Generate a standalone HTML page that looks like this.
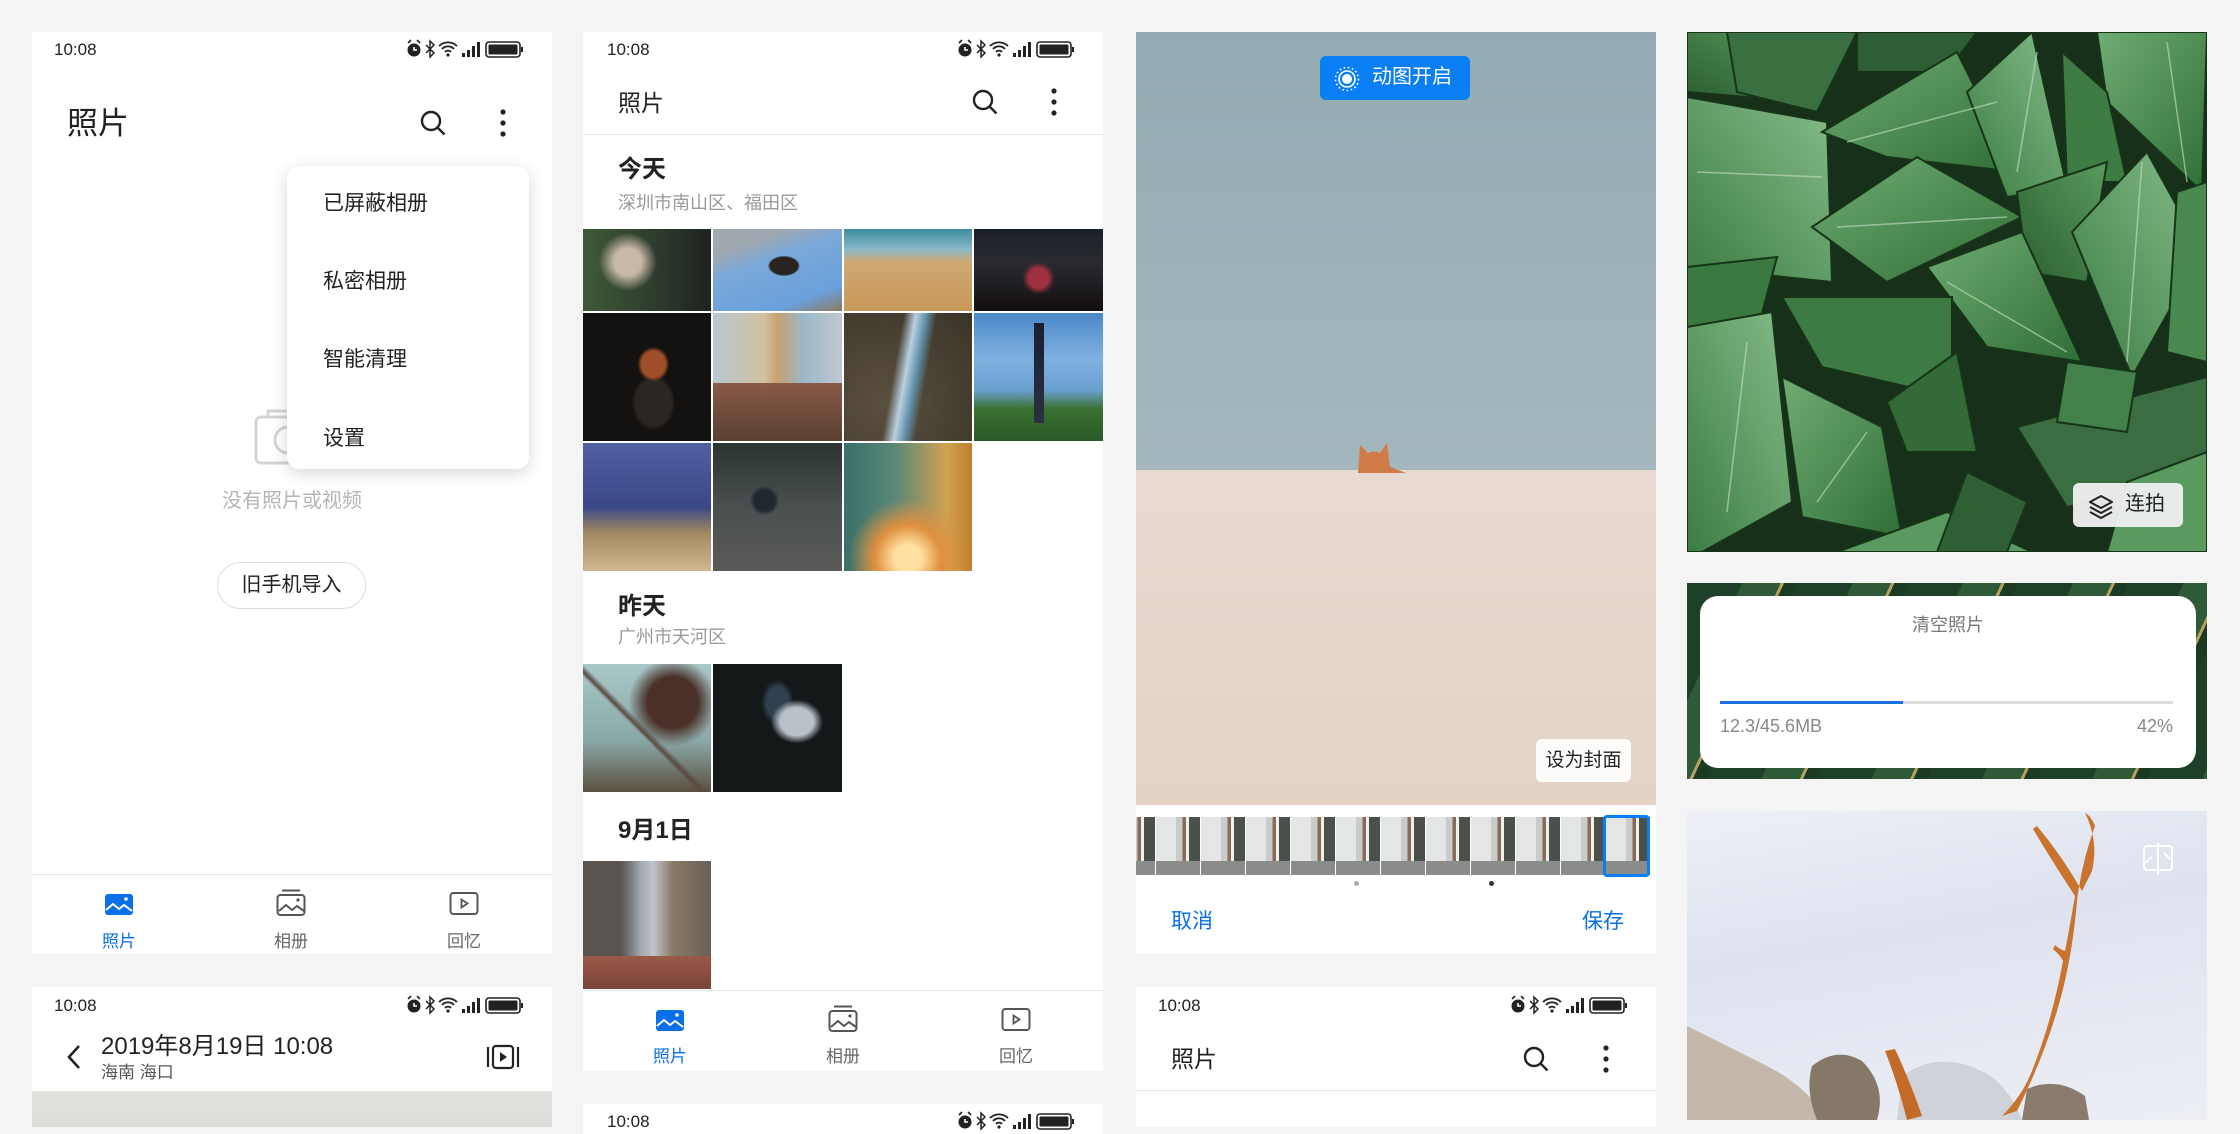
<!DOCTYPE html>
<html><head><meta charset="utf-8">
<style>
*{margin:0;padding:0;box-sizing:border-box}
body{width:2240px;height:1120px;background:#f4f4f4;position:relative;overflow:hidden;font-family:"Liberation Sans","Noto Sans CJK SC",sans-serif;color:#222}
.a{position:absolute}
.p{position:absolute;background:#fff;overflow:hidden}
.t{position:absolute;white-space:nowrap;line-height:1}
.time{font-size:17px;color:#222}
.tab{position:absolute;width:100px;text-align:center;font-size:17px;color:#666}
.tab.on{color:#0a6fe8}
.fr{position:absolute;top:0;width:44px;height:58px;background:linear-gradient(90deg,#e4e6e6 0 45%,#c8ccca 45% 60%,#8a6a58 60% 68%,#f0f0ee 68% 75%,#4a504a 75%)}
.fr::after{content:"";position:absolute;left:0;bottom:0;width:44px;height:14px;background:#8a8c8a}
</style></head><body>
<svg width="0" height="0" style="position:absolute">
<defs>
<symbol id="sb" viewBox="0 0 124 20">
<circle cx="8" cy="11" r="6.5" fill="#222"/><path d="M2 4l3-3M14 4l-3-3" stroke="#222" stroke-width="1.6"/><path d="M8 8v3h3" stroke="#fff" stroke-width="1.6" fill="none"/>
<path d="M20 6l8 8-4 4V2l4 4-8 8" stroke="#222" stroke-width="1.5" fill="none"/>
<path d="M33 7a13 13 0 0 1 18 0M36 10a8 8 0 0 1 12 0M39 13a4 4 0 0 1 6 0" stroke="#222" stroke-width="1.8" fill="none"/><circle cx="42" cy="16" r="1.6" fill="#222"/>
<rect x="56" y="14" width="3" height="4" fill="#222"/><rect x="61" y="11" width="3" height="7" fill="#222"/><rect x="66" y="7" width="3" height="11" fill="#222"/><rect x="71" y="3" width="3" height="15" fill="#222"/>
<rect x="80" y="3" width="34" height="15" rx="3" fill="none" stroke="#222" stroke-width="1.6"/><rect x="82.5" y="5.5" width="29" height="10" rx="1" fill="#222"/><rect x="115" y="8" width="2" height="5" fill="#222"/>
</symbol>
<symbol id="srch" viewBox="0 0 30 30"><circle cx="13" cy="13" r="9" stroke="#222" stroke-width="2.4" fill="none"/><path d="M19.5 19.5l7 7" stroke="#222" stroke-width="2.4"/></symbol>
<symbol id="dots" viewBox="0 0 10 30"><circle cx="5" cy="4" r="2.6" fill="#222"/><circle cx="5" cy="15" r="2.6" fill="#222"/><circle cx="5" cy="26" r="2.6" fill="#222"/></symbol>
<symbol id="tphoto" viewBox="0 0 30 24"><rect x="1" y="2" width="28" height="21" rx="3" fill="#0a6fe8"/><path d="M2 18l7-6 6 5 5-4 8 6" stroke="#fff" stroke-width="2" fill="none"/><circle cx="22" cy="7" r="1.8" fill="#fff"/></symbol>
<symbol id="talbum" viewBox="0 0 30 28"><path d="M6 1.5h18" stroke="#555" stroke-width="2"/><rect x="1.5" y="6" width="27" height="20" rx="3" fill="none" stroke="#555" stroke-width="2"/><path d="M3 22l7-6 6 5 5-4 7 5" stroke="#555" stroke-width="2" fill="none"/><circle cx="22" cy="11" r="1.6" fill="#555"/></symbol>
<symbol id="tmem" viewBox="0 0 30 26"><rect x="1.5" y="2" width="27" height="21" rx="3" fill="none" stroke="#555" stroke-width="2"/><path d="M12.5 8.5v8l6-4z" fill="none" stroke="#555" stroke-width="1.8"/></symbol>
</defs></svg>

<!-- PANEL 1 -->
<div class="p" style="left:32px;top:32px;width:520px;height:922px">
 <div class="t time" style="left:22px;top:9px">10:08</div>
 <svg class="a" style="left:374px;top:7px" width="124" height="20"><use href="#sb"/></svg>
 <div class="t" style="left:35px;top:76px;font-size:31px;color:#222">照片</div>
 <svg class="a" style="left:386px;top:76px" width="30" height="30"><use href="#srch"/></svg>
 <svg class="a" style="left:466px;top:76px" width="10" height="30"><use href="#dots"/></svg>
 <svg class="a" style="left:222px;top:375px" width="70" height="60"><rect x="2" y="10" width="64" height="46" rx="5" fill="none" stroke="#d4d4d4" stroke-width="3"/><path d="M14 10V4h22v6" fill="none" stroke="#d4d4d4" stroke-width="3"/><circle cx="34" cy="33" r="13" fill="none" stroke="#d4d4d4" stroke-width="3"/></svg>
 <div class="t" style="left:0;width:520px;text-align:center;top:459px;font-size:20px;color:#b5b5b5">没有照片或视频</div>
 <div class="a" style="left:185px;top:530px;width:149px;height:47px;border:1px solid #ddd;border-radius:24px;font-size:20px;text-align:center;line-height:45px;color:#222">旧手机导入</div>
 <div class="a" style="left:255px;top:134px;width:242px;height:303px;background:#fff;border-radius:12px;box-shadow:0 4px 16px rgba(0,0,0,.16)">
  <div class="t" style="left:36px;top:27px;font-size:21px;color:#222">已屏蔽相册</div>
  <div class="t" style="left:36px;top:105px;font-size:21px;color:#222">私密相册</div>
  <div class="t" style="left:36px;top:183px;font-size:21px;color:#222">智能清理</div>
  <div class="t" style="left:36px;top:262px;font-size:21px;color:#222">设置</div>
 </div>
 <div class="a" style="left:0;top:842px;width:520px;height:1px;background:#e6e6e6"></div>
 <svg class="a" style="left:72px;top:860px" width="30" height="24"><use href="#tphoto"/></svg>
 <svg class="a" style="left:244px;top:857px" width="30" height="28"><use href="#talbum"/></svg>
 <svg class="a" style="left:417px;top:859px" width="30" height="26"><use href="#tmem"/></svg>
 <div class="tab on" style="left:37px;top:895px">照片</div>
 <div class="tab" style="left:209px;top:895px">相册</div>
 <div class="tab" style="left:382px;top:895px">回忆</div>
</div>

<!-- PANEL 5 -->
<div class="p" style="left:32px;top:987px;width:520px;height:140px">
 <div class="t time" style="left:22px;top:10px">10:08</div>
 <svg class="a" style="left:374px;top:8px" width="124" height="20"><use href="#sb"/></svg>
 <svg class="a" style="left:34px;top:56px" width="16" height="28"><path d="M13 3L3 14l10 11" stroke="#222" stroke-width="2.6" fill="none"/></svg>
 <div class="t" style="left:69px;top:48px;font-size:24px;color:#222">2019年8月19日 10:08</div>
 <div class="t" style="left:69px;top:77px;font-size:17px;color:#555">海南 海口</div>
 <svg class="a" style="left:454px;top:57px" width="34" height="26"><path d="M2 3v20M32 3v20" stroke="#222" stroke-width="2.2"/><rect x="7" y="2" width="20" height="22" rx="3" fill="none" stroke="#222" stroke-width="2.2"/><path d="M14 8v10l7-5z" fill="#222"/></svg>
 <div class="a" style="left:0;top:104px;width:520px;height:40px;background:linear-gradient(#e4e2df,#dedcd9)"></div>
</div>

<!-- PANEL 2 -->
<div class="p" style="left:583px;top:32px;width:520px;height:1039px">
 <div class="t time" style="left:24px;top:9px">10:08</div>
 <svg class="a" style="left:374px;top:7px" width="124" height="20"><use href="#sb"/></svg>
 <div class="t" style="left:35px;top:60px;font-size:23px;color:#222">照片</div>
 <svg class="a" style="left:387px;top:55px" width="30" height="30"><use href="#srch"/></svg>
 <svg class="a" style="left:466px;top:55px" width="10" height="30"><use href="#dots"/></svg>
 <div class="a" style="left:0;top:102px;width:520px;height:1px;background:#e6e6e6"></div>
 <div class="t" style="left:35px;top:126px;font-size:24px;font-weight:bold;color:#222">今天</div>
 <div class="t" style="left:35px;top:162px;font-size:18px;color:#999">深圳市南山区、福田区</div>
 <div class="a" style="left:0;top:197px;width:128px;height:82px;background:radial-gradient(circle at 35% 40%,#c8b8a8 0 14%,transparent 30%),linear-gradient(90deg,#3f5a38,#2c3a2c 60%,#1e2220)"></div>
 <div class="a" style="left:130px;top:197px;width:129px;height:82px;background:radial-gradient(ellipse at 55% 45%,#2a2420 0 14%,transparent 16%),linear-gradient(160deg,#a0a8b0 20%,#7aa8d8 40%,#6aa0dc 80%,#8a7a60)"></div>
 <div class="a" style="left:261px;top:197px;width:128px;height:82px;background:linear-gradient(#3e8ca0,#8ab8c8 25%,#cfa874 40%,#c89858 100%)"></div>
 <div class="a" style="left:391px;top:197px;width:129px;height:82px;background:radial-gradient(circle at 50% 60%,#a03040 0 12%,transparent 20%),linear-gradient(#1a2028,#2a2a30 40%,#141010)"></div>
 <div class="a" style="left:0;top:281px;width:128px;height:128px;background:radial-gradient(ellipse at 55% 40%,#a05028 0 12%,transparent 16%),radial-gradient(ellipse at 55% 70%,#2a2624 0 18%,transparent 22%),#141210"></div>
 <div class="a" style="left:130px;top:281px;width:129px;height:128px;background:linear-gradient(90deg,#b8c8d0,#d0c0a0 40%,#c8a070 50%,#9ab8c8 70%,#c0c8d0)"><div class="a" style="left:0;top:70px;width:129px;height:58px;background:linear-gradient(#8a5a48,#5a4030)"></div></div>
 <div class="a" style="left:261px;top:281px;width:128px;height:128px;background:linear-gradient(100deg,transparent 40%,#b8d0e0 48%,#6090a8 55%,transparent 62%),radial-gradient(circle at 30% 70%,#5a5040,#3a3428)"></div>
 <div class="a" style="left:391px;top:281px;width:129px;height:128px;background:linear-gradient(#4a88c8,#80b0e0 35%,#6aa0d0 60%,#3a7030 75%,#2a5a28)"><div class="a" style="left:60px;top:10px;width:10px;height:100px;background:linear-gradient(#1a2030,#2a3040)"></div></div>
 <div class="a" style="left:0;top:411px;width:128px;height:128px;background:linear-gradient(#5060a0,#3a4888 50%,#a08860 70%,#d0b890)"></div>
 <div class="a" style="left:130px;top:411px;width:129px;height:128px;background:radial-gradient(circle at 40% 45%,#202830 0 10%,transparent 14%),linear-gradient(#2a3430,#4a5050 50%,#5a5a58)"></div>
 <div class="a" style="left:261px;top:411px;width:128px;height:128px;background:radial-gradient(circle at 50% 90%,#ffe0a0 0 10%,#e09040 25%,transparent 45%),linear-gradient(90deg,#3a7068,#5a8878 40%,#d0a050 80%,#c08030)"></div>
 <div class="t" style="left:35px;top:563px;font-size:24px;font-weight:bold;color:#222">昨天</div>
 <div class="t" style="left:35px;top:596px;font-size:18px;color:#999">广州市天河区</div>
 <div class="a" style="left:0;top:632px;width:128px;height:128px;background:linear-gradient(45deg,transparent 45%,#5a4a40 47%,transparent 50%),radial-gradient(circle at 70% 30%,#4a3028 0 20%,transparent 35%),linear-gradient(#a8c8c8,#8aa8a8 60%,#5a5040)"></div>
 <div class="a" style="left:130px;top:632px;width:129px;height:128px;background:radial-gradient(ellipse at 65% 45%,#b8c0c8 0 14%,transparent 22%),radial-gradient(ellipse at 50% 30%,#304050 0 12%,transparent 18%),#141818"></div>
 <div class="t" style="left:35px;top:787px;font-size:24px;font-weight:bold;color:#222">9月1日</div>
 <div class="a" style="left:0;top:829px;width:128px;height:128px;background:linear-gradient(90deg,#5a5450 0 30%,#a0a8b0 45%,#c0c4c8 55%,#8a7a68 70%,#6a6058)"><div class="a" style="left:0;top:95px;width:128px;height:33px;background:linear-gradient(#9a5a48,#7a4438)"></div></div>
 <div class="a" style="left:0;top:958px;width:520px;height:1px;background:#e6e6e6"></div>
 <svg class="a" style="left:72px;top:976px" width="30" height="24"><use href="#tphoto"/></svg>
 <svg class="a" style="left:245px;top:973px" width="30" height="28"><use href="#talbum"/></svg>
 <svg class="a" style="left:418px;top:975px" width="30" height="26"><use href="#tmem"/></svg>
 <div class="tab on" style="left:37px;top:1010px">照片</div>
 <div class="tab" style="left:210px;top:1010px">相册</div>
 <div class="tab" style="left:383px;top:1010px">回忆</div>
</div>
<div class="p" style="left:583px;top:1104px;width:520px;height:30px">
 <div class="t time" style="left:24px;top:9px">10:08</div>
 <svg class="a" style="left:374px;top:7px" width="124" height="20"><use href="#sb"/></svg>
</div>

<!-- PANEL 3 -->
<div class="p" style="left:1136px;top:32px;width:520px;height:922px">
 <div class="a" style="left:0;top:0;width:520px;height:440px;background:linear-gradient(#93abb3,#a3b7bd)"></div>
 <div class="a" style="left:0;top:438px;width:520px;height:335px;background:linear-gradient(#e8dad2,#e4d2c6)"></div>
 <svg class="a" style="left:218px;top:405px" width="60" height="40"><path d="M4 36 L6 8 L14 16 Q20 13 26 16 L33 6 L36 30 Q42 32 52 36 Z" fill="#d07a48"/></svg>
 <div class="a" style="left:184px;top:24px;width:150px;height:44px;background:#0a7ff5;border-radius:6px">
  <svg class="a" style="left:14px;top:10px" width="26" height="26"><circle cx="13" cy="13" r="5" fill="#fff"/><circle cx="13" cy="13" r="8" fill="none" stroke="#fff" stroke-width="1.6"/><circle cx="13" cy="13" r="11.5" fill="none" stroke="#fff" stroke-width="1.6" stroke-dasharray="1.6 2.6"/></svg>
  <div class="t" style="left:52px;top:11px;font-size:20px;color:#fff">动图开启</div>
 </div>
 <div class="a" style="left:400px;top:707px;width:95px;height:43px;background:rgba(255,255,255,.92);border-radius:6px;font-size:19px;text-align:center;line-height:43px;color:#222">设为封面</div>
 <div class="a" style="left:0;top:785px;width:520px;height:58px">
  <div class="fr" style="left:-25px"></div><div class="fr" style="left:20px"></div><div class="fr" style="left:65px"></div><div class="fr" style="left:110px"></div><div class="fr" style="left:155px"></div><div class="fr" style="left:200px"></div><div class="fr" style="left:245px"></div><div class="fr" style="left:290px"></div><div class="fr" style="left:335px"></div><div class="fr" style="left:380px"></div><div class="fr" style="left:425px"></div><div class="fr" style="left:470px"></div>
 </div>
 <div class="a" style="left:467px;top:783px;width:47px;height:62px;border:3px solid #0a7ff5;border-radius:4px"></div>
 <div class="a" style="left:218px;top:849px;width:5px;height:5px;border-radius:50%;background:#aaa"></div>
 <div class="a" style="left:353px;top:849px;width:5px;height:5px;border-radius:50%;background:#333"></div>
 <div class="t" style="left:35px;top:879px;font-size:21px;color:#0a6fe8">取消</div>
 <div class="t" style="left:446px;top:879px;font-size:21px;color:#0a6fe8">保存</div>
</div>

<!-- PANEL 7 -->
<div class="p" style="left:1136px;top:987px;width:520px;height:140px">
 <div class="t time" style="left:22px;top:10px">10:08</div>
 <svg class="a" style="left:374px;top:8px" width="124" height="20"><use href="#sb"/></svg>
 <div class="t" style="left:35px;top:61px;font-size:23px;color:#222">照片</div>
 <svg class="a" style="left:385px;top:57px" width="30" height="30"><use href="#srch"/></svg>
 <svg class="a" style="left:465px;top:57px" width="10" height="30"><use href="#dots"/></svg>
 <div class="a" style="left:0;top:103px;width:520px;height:1px;background:#e6e6e6"></div>
</div>

<!-- PANEL 4 leaves -->
<div class="p" style="left:1687px;top:32px;width:520px;height:520px;background:#16301a">
 <svg width="520" height="520" class="a" style="left:0;top:0">
  <defs><linearGradient id="lg" x1="0" y1="0" x2="1" y2="1"><stop offset="0" stop-color="#70ac74"/><stop offset="1" stop-color="#2f6e36"/></linearGradient>
  <linearGradient id="lg2" x1="1" y1="0" x2="0" y2="1"><stop offset="0" stop-color="#86bc8a"/><stop offset="1" stop-color="#3c7c42"/></linearGradient>
  <linearGradient id="lg3" x1="0" y1="1" x2="1" y2="0"><stop offset="0" stop-color="#2a5e30"/><stop offset="1" stop-color="#5a9a5e"/></linearGradient></defs>
  <g stroke="#173419" stroke-width="2">
  <path d="M0 0 L130 0 L120 70 L0 60 Z" fill="url(#lg3)"/>
  <path d="M40 0 L170 0 L130 80 L50 60Z" fill="#3a7040"/>
  <path d="M170 0 L290 0 L260 40 L170 40Z" fill="#2e5e34"/>
  <path d="M0 65 L140 90 L145 250 L0 235 Z" fill="url(#lg2)"/>
  <path d="M135 100 L270 20 L330 140 L200 125 Z" fill="url(#lg)"/>
  <path d="M280 60 L345 0 L380 155 L320 165 Z" fill="url(#lg2)"/>
  <path d="M410 0 L520 0 L515 160 L420 70 Z" fill="url(#lg)"/>
  <path d="M375 20 L420 60 L440 150 L380 150 Z" fill="#3e7c44"/>
  <path d="M125 195 L230 125 L335 185 L200 250 Z" fill="url(#lg)"/>
  <path d="M330 160 L420 130 L400 250 L340 240 Z" fill="url(#lg3)"/>
  <path d="M385 200 L460 120 L515 220 L445 345 Z" fill="url(#lg2)"/>
  <path d="M490 160 L520 150 L520 330 L480 320 Z" fill="#4a8a50"/>
  <path d="M240 235 L335 200 L395 330 L300 315 Z" fill="url(#lg)"/>
  <path d="M0 235 L90 225 L70 300 L0 300 Z" fill="#3a7a40"/>
  <path d="M0 295 L85 280 L105 470 L15 520 L0 520 Z" fill="url(#lg2)"/>
  <path d="M95 345 L195 395 L215 505 L115 485 Z" fill="url(#lg)"/>
  <path d="M95 265 L265 265 L265 365 L135 335 Z" fill="#3e7a44"/>
  <path d="M200 370 L270 320 L290 420 L220 420 Z" fill="#336a38"/>
  <path d="M330 395 L520 345 L520 445 L380 475 Z" fill="#3a6e40"/>
  <path d="M380 330 L450 340 L440 400 L370 390Z" fill="#44804a"/>
  <path d="M150 520 L260 480 L345 520 Z" fill="#5a9a60"/>
  <path d="M440 450 L520 420 L520 520 L420 520 Z" fill="#5a9a5e"/>
  <path d="M280 440 L340 470 L320 520 L250 520Z" fill="#2e6034"/>
  </g>
  <g stroke="#c8e0c8" stroke-width="1.5" opacity=".6" fill="none">
  <path d="M10 140 L135 145"/><path d="M160 110 L310 70"/><path d="M330 140 L350 20"/><path d="M150 195 L320 185"/><path d="M440 330 L455 130"/><path d="M40 480 L60 310"/><path d="M130 470 L180 400"/><path d="M480 10 L500 150"/><path d="M260 250 L380 320"/>
  </g>
 </svg>
 <div class="a" style="left:386px;top:451px;width:110px;height:44px;background:rgba(240,240,240,.95);border-radius:6px">
  <svg class="a" style="left:15px;top:10px" width="26" height="26"><path d="M13 3L24 9 13 15 2 9Z" fill="none" stroke="#222" stroke-width="2" stroke-linejoin="round"/><path d="M2 14l11 6 11-6M2 19l11 6 11-6" fill="none" stroke="#222" stroke-width="2" stroke-linejoin="round"/></svg>
  <div class="t" style="left:52px;top:11px;font-size:20px;color:#222">连拍</div>
 </div>
</div>

<!-- PANEL 6 -->
<div class="p" style="left:1687px;top:583px;width:520px;height:196px;background:repeating-linear-gradient(115deg,#1e4028 0 50px,#2e5a38 50px 85px,#b8a060 85px 88px,#1a3a24 88px 100px)">
 <div class="a" style="left:13px;top:13px;width:496px;height:172px;background:#fff;border-radius:18px">
  <div class="t" style="left:0;width:496px;text-align:center;top:20px;font-size:18px;color:#777">清空照片</div>
  <div class="a" style="left:20px;top:105px;width:453px;height:3px;background:#ddd"></div>
  <div class="a" style="left:20px;top:105px;width:183px;height:3px;background:#1a72e0"></div>
  <div class="t" style="left:20px;top:121px;font-size:18px;color:#888">12.3/45.6MB</div>
  <div class="t" style="right:23px;top:121px;font-size:18px;color:#888">42%</div>
 </div>
</div>

<!-- PANEL 8 -->
<div class="p" style="left:1687px;top:811px;width:520px;height:309px;background:linear-gradient(170deg,#eef0f6,#dde2ee 40%,#e6e9f2 70%,#eceef4)">
 <svg width="520" height="309" class="a" style="left:0;top:0">
  <path d="M0 215 Q40 235 80 255 Q120 275 140 309 L0 309Z" fill="#c4b8ac"/>
  <path d="M125 255 Q150 235 175 250 Q200 275 190 309 L130 309 Q118 280 125 255Z" fill="#857868"/>
  <path d="M215 265 Q250 240 290 258 Q320 270 335 309 L210 309Z" fill="#cfd2d8"/>
  <path d="M340 278 Q370 265 398 285 L402 309 L335 309Z" fill="#8a7c6c"/>
  <path d="M198 240 L208 238 Q225 275 235 305 L220 309 Q210 270 198 240Z" fill="#c46a28"/>
  <path d="M330 300 Q355 250 370 200 Q385 150 390 90 Q395 50 408 15 Q404 5 398 2 Q412 30 405 60 L395 80 Q375 45 350 15 L346 18 Q365 50 388 85 Q382 120 378 140 Q372 138 368 134 L366 138 Q374 145 376 150 Q365 210 345 260 Q335 285 315 305Z" fill="#c8732e"/>
 </svg>
 <svg class="a" style="left:455px;top:32px" width="32" height="32"><rect x="2" y="3" width="28" height="24" rx="3" fill="none" stroke="#fff" stroke-width="2"/><path d="M16 0v32" stroke="#fff" stroke-width="2"/><path d="M3 20l7-6M22 10l6 6" stroke="#fff" stroke-width="1.8"/></svg>
</div>
</body></html>
